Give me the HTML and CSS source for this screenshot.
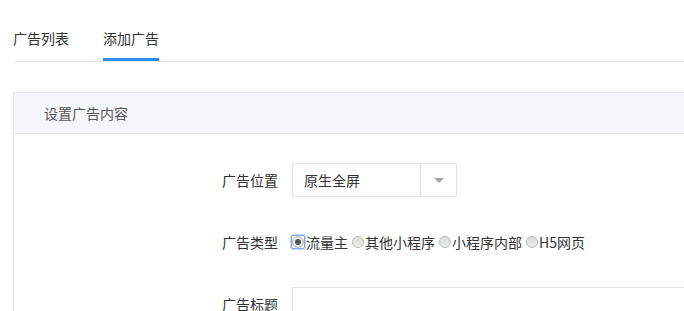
FILE: index.html
```html
<!DOCTYPE html>
<html lang="zh-CN">
<head>
    <meta charset="UTF-8">
    <title>添加广告</title>
    <link rel="stylesheet" href="styles.css">
</head>
<body>
    <div class="page">
        <div class="tabs">
            <a class="tab">广告列表</a>
            <a class="tab active">添加广告</a>
        </div>

        <!-- 广告内容 -->
        <section class="panel">
            <div class="panel-head">设置广告内容</div>
            <div class="panel-body">
                <div class="form-row">
                    <label class="form-label">广告位置</label>
                    <div class="select">
                        <span class="select-value">原生全屏</span>
                        <span class="select-arrow"><i></i></span>
                    </div>
                </div>
                <div class="form-row">
                    <label class="form-label">广告类型</label>
                    <div class="radio-group">
                        <label class="radio-item"><span class="radio-focus"><span class="radio checked"></span></span>流量主</label>
                        <label class="radio-item"><span class="radio"></span>其他小程序</label>
                        <label class="radio-item"><span class="radio"></span>小程序内部</label>
                        <label class="radio-item"><span class="radio"></span>H5网页</label>
                    </div>
                </div>
                <div class="form-row">
                    <label class="form-label">广告标题</label>
                    <input class="text-input" type="text">
                </div>
            </div>
        </section>
    </div>
</body>
</html>
```

FILE: styles.css
```css
html, body {
    margin: 0;
    padding: 0;
    overflow: hidden;
    background-color: #fff;
}
body {
    font-family: "Microsoft YaHei", "Noto Sans CJK SC", sans-serif;
    font-size: 14px;
    color: #333;
}
.page {
    padding-left: 13px;
    width: 760px;
}
.tabs {
    display: flex;
    gap: 34px;
    border-bottom: 1px solid #e8eaec;
}
.tab {
    display: block;
    padding: 28px 0 10px;
    line-height: 20px;
    color: #333;
    border-bottom: 3px solid transparent;
    cursor: pointer;
}
.tab.active {
    border-bottom-color: #2d8cf0;
}
.panel {
    margin-top: 30px;
    border: 1px solid #e8eaec;
    height: 300px;
}
.panel-head {
    height: 40px;
    line-height: 40px;
    padding-left: 30px;
    background-color: #f5f6f9;
    border-bottom: 1px solid #e8eaec;
    color: #555;
}
.panel-body {
    padding-top: 29px;
}
.form-row {
    display: flex;
    align-items: center;
    height: 34px;
    margin-bottom: 28px;
}
.form-label {
    width: 264px;
    margin-right: 14px;
    text-align: right;
    color: #333;
}
.select {
    display: flex;
    width: 163px;
    height: 32px;
    border: 1px solid #e3e4e8;
}
.select-value {
    flex: 1;
    padding-left: 11px;
    line-height: 32px;
    color: #333;
}
.select-arrow {
    width: 35px;
    border-left: 1px solid #e3e4e8;
    display: flex;
    align-items: center;
    justify-content: center;
}
.select-arrow i {
    width: 0;
    height: 0;
    border-left: 5px solid transparent;
    border-right: 5px solid transparent;
    border-top: 5px solid #a5a5a5;
}
.radio-group {
    display: flex;
    align-items: center;
    margin-left: -1px;
}
.radio-item {
    display: flex;
    align-items: center;
    margin-right: 4px;
    line-height: 20px;
    color: #333;
}
.radio {
    box-sizing: border-box;
    width: 12px;
    height: 12px;
    margin-right: 1px;
    border: 1px solid #b9b9b9;
    border-radius: 50%;
    background: linear-gradient(#dadada, #eeeeee);
    position: relative;
}
.radio-focus {
    display: flex;
    padding: 0;
    margin-right: 1px;
    border: 1px solid #7fa8e6;
    border-radius: 2px;
    box-shadow: 0 0 0 1px #c4d8f4;
}
.radio-focus .radio {
    margin-right: 0;
}
.radio.checked {
    background: #e8e8e8;
}
.radio.checked::after {
    content: "";
    position: absolute;
    left: 2px;
    top: 2px;
    width: 6px;
    height: 6px;
    border-radius: 50%;
    background-color: #555;
}
.text-input {
    box-sizing: border-box;
    width: 420px;
    height: 34px;
    border: 1px solid #e3e4e8;
    padding: 0 10px;
    outline: none;
}
```
